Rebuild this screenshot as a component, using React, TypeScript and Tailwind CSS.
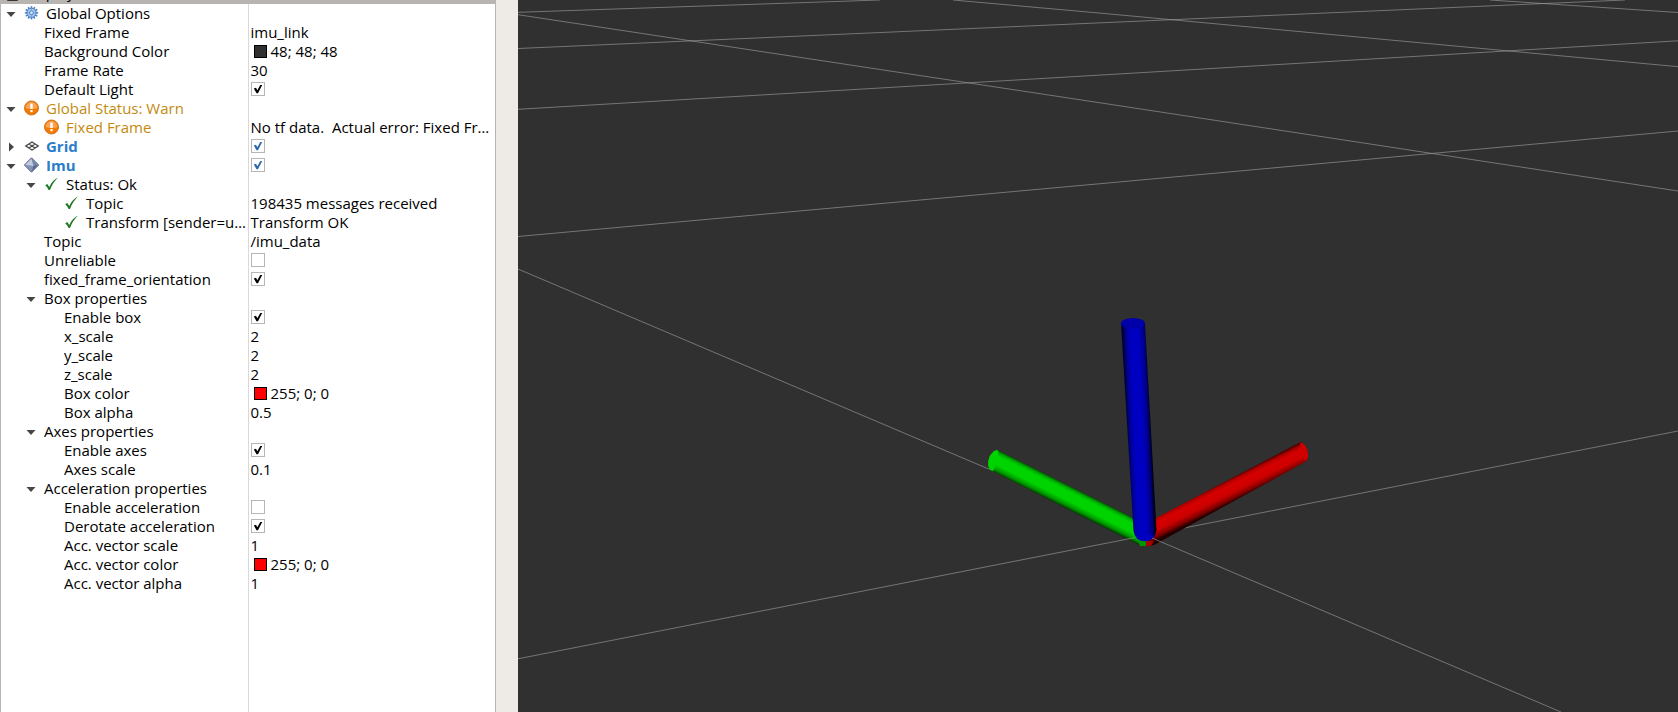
import { useState } from "react";

type IconName = "gear" | "warn" | "grid" | "imu" | "ok";
type Tone = "normal" | "warn" | "display";

interface Property {
  name: string;
  level: 0 | 1 | 2;
  icon?: IconName;
  tone?: Tone;
  expanded?: boolean;
  text?: string;
  color?: string;
  checked?: boolean;
}

const properties: Property[] = [
  { name: "Global Options", level: 0, icon: "gear", expanded: true },
  { name: "Fixed Frame", level: 1, text: "imu_link" },
  { name: "Background Color", level: 1, text: "48; 48; 48", color: "#303030" },
  { name: "Frame Rate", level: 1, text: "30" },
  { name: "Default Light", level: 1, checked: true },
  { name: "Global Status: Warn", level: 0, icon: "warn", tone: "warn", expanded: true },
  { name: "Fixed Frame", level: 1, icon: "warn", tone: "warn", text: "No tf data.  Actual error: Fixed Fr…" },
  { name: "Grid", level: 0, icon: "grid", tone: "display", expanded: false, checked: true },
  { name: "Imu", level: 0, icon: "imu", tone: "display", expanded: true, checked: true },
  { name: "Status: Ok", level: 1, icon: "ok", expanded: true },
  { name: "Topic", level: 2, icon: "ok", text: "198435 messages received" },
  { name: "Transform [sender=u…", level: 2, icon: "ok", text: "Transform OK" },
  { name: "Topic", level: 1, text: "/imu_data" },
  { name: "Unreliable", level: 1, checked: false },
  { name: "fixed_frame_orientation", level: 1, checked: true },
  { name: "Box properties", level: 1, expanded: true },
  { name: "Enable box", level: 2, checked: true },
  { name: "x_scale", level: 2, text: "2" },
  { name: "y_scale", level: 2, text: "2" },
  { name: "z_scale", level: 2, text: "2" },
  { name: "Box color", level: 2, text: "255; 0; 0", color: "#ff0000" },
  { name: "Box alpha", level: 2, text: "0.5" },
  { name: "Axes properties", level: 1, expanded: true },
  { name: "Enable axes", level: 2, checked: true },
  { name: "Axes scale", level: 2, text: "0.1" },
  { name: "Acceleration properties", level: 1, expanded: true },
  { name: "Enable acceleration", level: 2, checked: false },
  { name: "Derotate acceleration", level: 2, checked: true },
  { name: "Acc. vector scale", level: 2, text: "1" },
  { name: "Acc. vector color", level: 2, text: "255; 0; 0", color: "#ff0000" },
  { name: "Acc. vector alpha", level: 2, text: "1" },
];

const indents = { 0: "pl-0", 1: "pl-5", 2: "pl-10" };

const tones: Record<Tone, string> = {
  normal: "text-black",
  warn: "text-[#c48a0e]",
  display: "font-bold text-[#2a7dc9]",
};

const gearTeeth = [0, 30, 60, 90, 120, 150, 180, 210, 240, 270, 300, 330];

function Icon({ name }: { name: IconName }) {
  return (
    <svg viewBox="0 0 16 16" className="mb-0.5 size-4 shrink-0" aria-hidden="true">
      {name === "gear" && (
        <g>
          {gearTeeth.map((a) => (
            <rect key={a} x="6.7" y="1.2" width="1.600" height="3" fill="#4a80c4" transform={`rotate(${a} 7.5 7.8)`} />
          ))}
          <circle cx="7.5" cy="7.8" r="4.6" fill="#a9c8ec" stroke="#4a80c4" />
          <circle cx="7.5" cy="7.8" r="1.9" fill="#d8e8fa" stroke="#4a80c4" />
          <path d="M7.5 3.8v2M7.5 9.8v2M3.5 7.8h2M9.500 7.8h2" stroke="#6f9dd6" strokeWidth="0.8" />
        </g>
      )}
      {name === "warn" && (
        <g>
          <circle cx="7.5" cy="8" r="7" fill="#f57900" stroke="#d2761f" />
          <path d="M1.6 8a5.9 5.9 0 0 1 11.8 0c-3 1.4-8.500 1.400-11.800 0z" fill="#fba457" />
          <rect x="6.300" y="3.500" width="2.400" height="5.500" rx="0.500" fill="#fff" />
          <rect x="6.300" y="10" width="2.400" height="2.200" rx="0.500" fill="#fff" />
        </g>
      )}
      {name === "grid" && (
        <path
          d="M8 4 14.200 8 8 12 1.800 8zM4.900 6 11.100 10M11.100 6 4.900 10"
          fill="none"
          stroke="#444"
          strokeWidth="1.300"
        />
      )}
      {name === "imu" && (
        <g>
          <path d="M7.500 .8 14.600 8 7.500 15.200 .4 8z" fill="#8fa0bf" stroke="#3d4c78" strokeWidth="0.900" />
          <path d="M7.500 1.500 9.500 9 1.200 8z" fill="#c3cddd" />
          <path d="M7.500 1.500 14 8 9.500 9z" fill="#7688ad" />
          <path d="M1.200 8 9.500 9 7.500 14.500z" fill="#8394b6" />
          <path d="M14 8 9.500 9 7.500 14.500z" fill="#54658f" />
        </g>
      )}
      {name === "ok" && (
        <path d="M1.200 9.300 3.300 8l2 3C7.500 6.500 10 3.800 14 1.600 10.500 5 8 8.800 6 14H4.600C3.600 12 2.600 10.500 1.200 9.300z" fill="#1f7a24" />
      )}
    </svg>
  );
}

function Toggle({ open, label }: { open: boolean; label: string }) {
  return (
    <button type="button" aria-label={`Toggle ${label}`} aria-expanded={open} className="flex h-4 w-[19px] items-center justify-center">
      <svg viewBox="0 0 10 10" className="size-2.5" aria-hidden="true">
        <path d={open ? "M.5 3h9L5 8z" : "M3 .5v9L8 5z"} fill="#464646" />
      </svg>
    </button>
  );
}

function Check({ id, initial, tone }: { id: string; initial: boolean; tone: Tone }) {
  const [on, setOn] = useState(initial);
  return (
    <span className="mb-px grid size-3.5">
      <input
        id={id}
        type="checkbox"
        checked={on}
        onChange={(e) => setOn(e.target.checked)}
        className="col-start-1 row-start-1 size-3.5 appearance-none border border-[#b9b5b1] bg-white"
      />
      {on && (
        <svg
          viewBox="0 0 14 14"
          aria-hidden="true"
          className={
            tone === "display"
              ? "pointer-events-none col-start-1 row-start-1 size-3.5 text-[#2a6aa8]"
              : "pointer-events-none col-start-1 row-start-1 size-3.5 text-black"
          }
        >
          <path d="M2.800 6.500 5 5.800l1.300 2.400L9.300 3 11.200 3.100 7 11.200H5.500z" fill="currentColor" />
        </svg>
      )}
    </span>
  );
}

function Row({ item, id }: { item: Property; id: string }) {
  const tone = item.tone ?? "normal";
  const body = item.checked === undefined ? <span>{item.name}</span> : <label htmlFor={id}>{item.name}</label>;
  return (
    <tr className="h-[19px]">
      <th scope="row" className="border-r border-[#d9d9d9] p-0 text-left font-normal">
        <div className={`flex h-[19px] items-center ${indents[item.level]}`}>
          <span className="mr-[3px] w-5 shrink-0">
            {item.expanded !== undefined && <Toggle open={item.expanded} label={item.name} />}
          </span>
          <span className={`flex items-center gap-1.5 whitespace-nowrap ${tones[tone]}`}>
            {item.icon && <Icon name={item.icon} />}
            {body}
          </span>
        </div>
      </th>
      <td className="p-0">
        <div className="flex h-[19px] items-center whitespace-pre pl-0.5">
          {item.checked !== undefined && <Check id={id} initial={item.checked} tone={tone} />}
          {item.color && (
            <span className="mr-1 ml-[3px] size-[13px] border border-black" style={{ backgroundColor: item.color }} />
          )}
          {item.text}
        </div>
      </td>
    </tr>
  );
}

const gridLines = [
  "M518 12.300 880 0",
  "M518 48.500 1110 22.400 1625 0",
  "M518 109.300 1110 74.500 1678 40.800",
  "M518 236.500 1110 182.800 1678 131",
  "M518 14.700 1110 104.300 1678 191",
  "M953 0 1110 14 1678 66.700",
  "M1490 0 1678 12.500",
  "M518 269 995 471.700",
  "M1183 528.200 1678 431",
];

function Scene() {
  return (
    <svg
      viewBox="518 0 1160 712"
      preserveAspectRatio="xMinYMin slice"
      className="h-full w-full"
      role="img"
      aria-label="3D view of the IMU axes on a grid"
    >
      <defs>
        <linearGradient id="green" gradientUnits="userSpaceOnUse" x1="1060" y1="481" x2="1050" y2="501">
          <stop offset="0" stopColor="#004a00" />
          <stop offset="0.1" stopColor="#00a400" />
          <stop offset="0.25" stopColor="#00d400" />
          <stop offset="0.62" stopColor="#00d400" />
          <stop offset="0.84" stopColor="#009400" />
          <stop offset="1" stopColor="#002800" />
        </linearGradient>
        <linearGradient id="red" gradientUnits="userSpaceOnUse" x1="1225" y1="481" x2="1235" y2="501">
          <stop offset="0" stopColor="#580000" />
          <stop offset="0.1" stopColor="#a80000" />
          <stop offset="0.28" stopColor="#d60000" />
          <stop offset="0.6" stopColor="#cc0000" />
          <stop offset="0.84" stopColor="#820000" />
          <stop offset="1" stopColor="#200000" />
        </linearGradient>
        <linearGradient id="blue" gradientUnits="userSpaceOnUse" x1="1127" y1="430" x2="1151" y2="429">
          <stop offset="0" stopColor="#000038" />
          <stop offset="0.12" stopColor="#000090" />
          <stop offset="0.32" stopColor="#0000c4" />
          <stop offset="0.66" stopColor="#0000c0" />
          <stop offset="0.88" stopColor="#000080" />
          <stop offset="1" stopColor="#000018" />
        </linearGradient>
      </defs>
      <g fill="none" stroke="#a0a0a0" strokeOpacity="0.62">
        {gridLines.map((d) => (
          <path key={d} d={d} />
        ))}
      </g>
      <path d="M1300 442.300 1150 521 1148 546 1154 545 1306 461.500C1309 459 1308.500 452 1306 447.500Q1303 442 1300 442.300z" fill="url(#red)" />
      <path d="M1300 443C1301 448 1303 457 1305 461 1309 459 1308.500 452 1306 447.500Q1303 442 1300 443z" fill="#d00000" />
      <path d="M1146 541h8l-3 5h-5z" fill="#a80000" />
      <path d="M998 450 1138 520 1146 546 1139 545 993 471.500C987 471 987.500 461 990 456Q994 449.500 998 450z" fill="url(#green)" />
      <path d="M998 450.500C999 454 996 466 993 471 987 471 987.500 461 990 456Q994 449.500 998 450.500z" fill="#00d400" />
      <path d="M1138 540h8v6h-6z" fill="#009600" />
      <path d="M1121 323.500 1133.500 531Q1135 541 1145 541.300 1155 541 1156.500 530L1145 323.500z" fill="url(#blue)" />
      <path d="M1136 536Q1140 534 1145 534 1151 534 1154.500 536 1151 541 1145 541 1139 541 1136 536z" fill="#0000c0" />
      <ellipse cx="1133" cy="323.300" rx="12" ry="5.400" fill="#0000a8" />
      <g fill="none" stroke="#a0a0a0" strokeOpacity="0.62">
        <path d="M518 658.800 1135 537.600" />
        <path d="M1152 538 1561 712" />
      </g>
    </svg>
  );
}

export default function App() {
  return (
    <div className="flex h-screen min-h-[600px] overflow-hidden bg-[#eeebe6] font-['Open_Sans',sans-serif] text-[15px] leading-[19px] text-black">
      <aside className="flex w-[496px] shrink-0 flex-col border-r border-l border-[#b8b4b1] bg-white">
        <header className="flex h-1 shrink-0 items-end gap-1.5 overflow-hidden bg-[#b8b4b1] pb-0.5 pl-1.5">
          <svg viewBox="0 0 11 11" className="mb-px size-[11px] shrink-0" aria-hidden="true">
            <rect width="11" height="11" rx="1" fill="#3a3836" />
          </svg>
          <h2>Displays</h2>
        </header>
        <table aria-label="Displays" className="w-full flex-1 table-fixed border-collapse">
          <colgroup>
            <col className="w-1/2" />
            <col className="w-1/2" />
          </colgroup>
          <tbody>
            {properties.map((item, i) => (
              <Row key={i} item={item} id={`property-${i}`} />
            ))}
            <tr>
              <td className="border-r border-[#d9d9d9]" />
              <td />
            </tr>
          </tbody>
        </table>
      </aside>
      <main className="ml-[22px] min-w-0 flex-1 bg-[#303030]">
        <Scene />
      </main>
    </div>
  );
}
